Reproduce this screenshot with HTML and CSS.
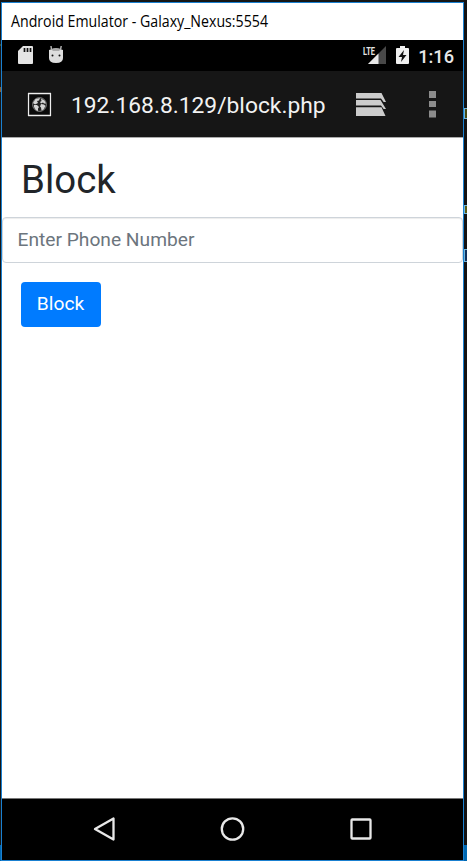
FILE: index.html
```html
<!DOCTYPE html>
<html lang="en">
<head>
<meta charset="utf-8">
<title>Android Emulator</title>
<link rel="stylesheet" href="styles.css">
</head>
<body>
<div class="backdrop-left"><i class="speck one"></i><i class="speck two"></i><i class="taskbar"></i></div>
<div class="backdrop-right"><i class="code-box first"></i><i class="code-box second"></i><i class="code-box third"></i><i class="taskbar"></i></div>
<main class="window">
  <header class="title"><svg class="title-label" width="300" height="37"><text x="9" y="24" textLength="257" lengthAdjust="spacingAndGlyphs">Android Emulator - Galaxy_Nexus:5554</text></svg></header>
  <div class="status">
    <svg class="sd" width="15" height="18" viewBox="0 0 15 18"><path fill="#e4e4e4" d="M5 0h9q1 0 1 1v16q0 1-1 1H1q-1 0-1-1V5z"/><path stroke="#111" stroke-width="1.700" d="M6.500 2v4M9.500 2v4M12.500 2v4"/></svg>
    <svg class="droid" width="16" height="19" viewBox="0 0 16 19"><path fill="#ddd" d="M1 5q7-3 14 0v8q0 5-7 5t-7-5z"/><path stroke="#bbb" stroke-width="1.400" d="M3.500 5L3 1M12.500 5l.7-4"/><path fill="#aaa" d="M3 4q5-2 10 0l-2 2H5z"/><circle cx="4.500" cy="10.500" r="1" fill="#111"/><circle cx="11.500" cy="10.500" r="1" fill="#111"/></svg>
    <span class="spacer"></span>
    <svg class="signal" width="26" height="22" viewBox="-2 -3 26 22"><text x="0" y="8.600" textLength="12" lengthAdjust="spacingAndGlyphs">LTE</text><path fill="#484848" d="M23 0v18H5z"/><path fill="#e8e8e8" d="M15.500 7.500V18H5z"/></svg>
    <svg class="battery" width="13" height="19" viewBox="0 0 13 19"><path fill="#f0f0f0" d="M4 0h5v2h3q1 0 1 1v14q0 1-1 1H1q-1 0-1-1V3q0-1 1-1h3z"/><path fill="#111" d="M8 4L2.500 11H6l-1 5 5.500-7H7z"/></svg>
    <span class="clock">1:16</span>
  </div>
  <div class="browser">
    <svg class="favicon" width="25" height="25" viewBox="0 0 25 25"><path fill="#0a0a0a" d="M0 0h25v25H0z"/><path fill="none" stroke="#eee" stroke-width="1.300" d="M1.500 1.500h22v22h-22z"/><circle cx="12.500" cy="12.500" r="6.900" fill="#222" stroke="#999" stroke-width=".8"/><path fill="#d4d4d4" d="M6 11l2.500-4L13 6l-1 2.500-2 .5 1 2-2 1-1 .5zM7 13l3 0 2 2-1 1.500v2.500q-3-1-4-4zM14 6.500l3.500 2 1.500 3-2 0-1-1-2 1-1-1.500 1.500-1zM14 12l3 .5 1.500 1.500-2 3.500-2 1-.5-3-1-1z"/></svg>
    <span class="url">192.168.8.129/block.php</span>
    <svg class="tabs" width="31" height="24" viewBox="0 0 31 24"><path fill="#ccc" d="M0 0h25.500L30 9h-2.300L25 5.500H0zM0 7h24.500L30 16h-2.300L25 12.500H0zM0 14.200h25.500L29.500 23H0z"/></svg>
    <svg class="more" width="7" height="27" viewBox="0 0 7 27"><path fill="#8c8c8c" d="M0 0h7v7H0zM0 10h7v6H0zM0 19.500h7v7H0z"/></svg>
  </div>
  <section class="page">
    <h1>Block</h1>
    <input type="text" placeholder="Enter Phone Number">
    <button type="button">Block</button>
  </section>
  <nav class="nav">
    <svg width="24" height="26" viewBox="0 0 24 26"><path d="M21.500 2.500v21L3 13z"/></svg>
    <svg width="26" height="26" viewBox="0 0 26 26"><circle cx="12.500" cy="13" r="10.700"/></svg>
    <svg width="24" height="26" viewBox="0 0 24 26"><rect x="2.500" y="3.500" width="19" height="19" rx=".8"/></svg>
  </nav>
</main>
</body>
</html>
```
FILE: styles.css
```css
* { box-sizing: border-box; }
body { margin: 0; width: 467px; height: 861px; overflow: hidden; background: #161616; font-family: Roboto, sans-serif; display: grid; grid-template-columns: 1px 463px 3px; }
svg { display: block; flex: none; }
.backdrop-left { grid-column: 1; grid-row: 1; position: relative; height: 861px; }
.backdrop-right { grid-column: 3; grid-row: 1; position: relative; height: 861px; background: #121212; }
.speck { position: absolute; left: 0; width: 1px; height: 2px; background: #3c4a2a; }
.speck.one { top: 44px; }
.speck.two { top: 87px; height: 5px; background: #8a5c2c; }
.code-box { position: absolute; left: 0; width: 3px; border: 1px solid #6fb5dc; border-right: 0; }
.code-box.first { top: 108px; height: 11px; background: #4a4a10; }
.code-box.second { top: 205px; height: 9px; background: #5a5a10; }
.code-box.third { top: 249px; height: 13px; background: #10305c; }
.taskbar { position: absolute; left: 0; right: 0; top: 845px; bottom: 0; background: #0067b0; }
.window { grid-column: 2; grid-row: 1; margin-top: 2px; height: 859px; border: 1px solid #1a80d0; display: flex; flex-direction: column; background: #fff; }
.title { height: 37px; flex: none; }
.title-label text { font: 15.500px "Open Sans", sans-serif; fill: #000; }
.status { height: 31px; flex: none; background: #000; display: flex; align-items: flex-start; padding: 6px 9px 0 16px; }
.droid { margin: -1px 0 0 15px; }
.spacer { flex: 1; }
.signal { margin-top: -3px; }
.signal text { font: bold 10.500px Roboto, sans-serif; fill: #e4e4e4; }
.battery { margin: 0 9px 0 9px; }
.clock { color: #e8e8e8; font-size: 18.200px; line-height: 22px; font-weight: 500; }
.browser { height: 67px; flex: none; background: #161616; border-bottom: 1px solid #aaa; display: flex; align-items: center; padding: 0 27px 0 25px; }
.url { margin: 3px 0 0 19px; flex: 1; white-space: nowrap; color: #f2f2f2; font-size: 22.800px; line-height: 30px; }
.tabs { margin-top: 2px; }
.more { margin-left: 42px; }
.page { flex: 1; display: flex; flex-direction: column; align-items: flex-start; }
h1 { margin: 18px 0 14px 19px; font-size: 38.400px; line-height: 47px; font-weight: 400; color: #212529; }
input { width: 461px; height: 46px; border: 1px solid #ced4da; border-radius: 4px; box-shadow: inset 0 1px 1px #00000013; padding: 0 14.500px 1px; font: 19.200px Roboto, sans-serif; }
input::placeholder { color: #6c757d; opacity: 1; }
button { margin: 19px 0 0 19px; width: 80px; height: 45px; padding: 0 1px 2px 0; border: 0; border-radius: 4px; background: #007bff; color: #fff; font: 19.200px Roboto, sans-serif; }
.nav { height: 62px; flex: none; border-top: 1px solid #777; background: #000; display: flex; align-items: center; justify-content: space-between; padding: 0 90px 1px 90px; }
.nav svg { fill: none; stroke: #e8e8e8; stroke-width: 2.300; stroke-linejoin: round; }
```
